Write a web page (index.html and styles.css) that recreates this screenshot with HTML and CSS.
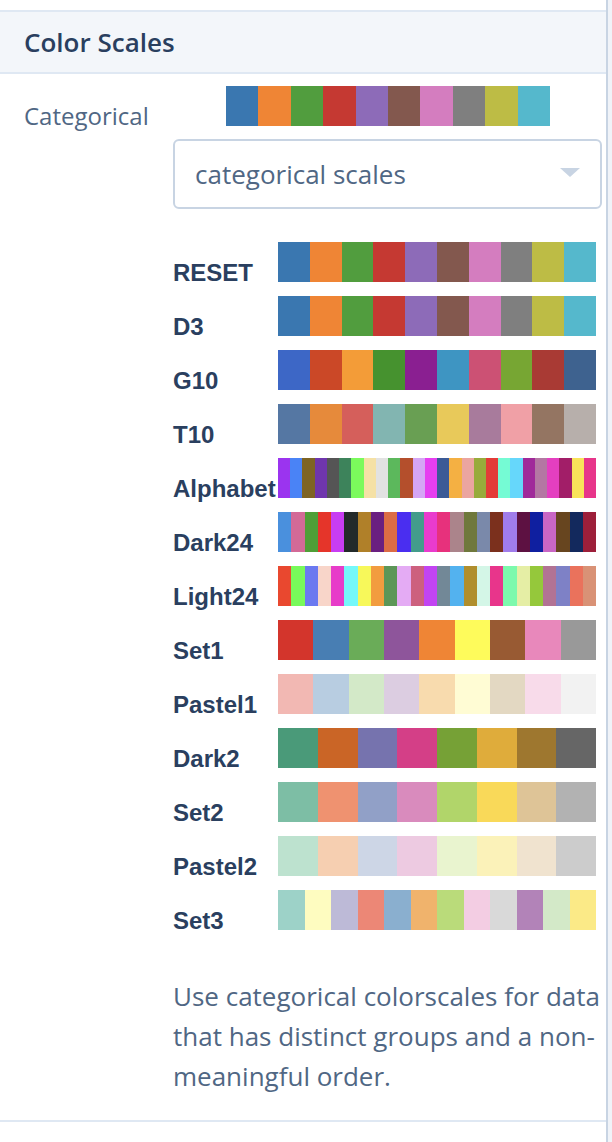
FILE: index.html
```html
<!DOCTYPE html>
<html lang="en">
<head>
<meta charset="utf-8">
<title>Color Scales</title>
<link rel="stylesheet" href="styles.css">
</head>
<body>
<div class="panel">
  <section class="fold">
    <header class="fold-header">Color Scales</header>
    <div class="fold-body">
      <div class="field">
        <div class="field-label">Categorical</div>
        <div class="swatch swatch-main">
          <span style="background:#3a77b0"></span><span style="background:#ef8535"></span><span style="background:#519d3e"></span><span style="background:#c53932"></span><span style="background:#8d6bb8"></span><span style="background:#83584e"></span><span style="background:#d47dbf"></span><span style="background:#7f7f7f"></span><span style="background:#bdbc45"></span><span style="background:#55b8cc"></span>
        </div>
      </div>

      <div class="dropdown">
        <span class="dropdown-value">categorical scales</span>
        <span class="caret"></span>
      </div>

      <div class="scales">
        <div class="scale"><div class="scale-name">RESET</div><div class="swatch">
          <span style="background:#3a77b0"></span><span style="background:#ef8535"></span><span style="background:#519d3e"></span><span style="background:#c53932"></span><span style="background:#8d6bb8"></span><span style="background:#83584e"></span><span style="background:#d47dbf"></span><span style="background:#7f7f7f"></span><span style="background:#bdbc45"></span><span style="background:#55b8cc"></span>
        </div></div>
        <div class="scale"><div class="scale-name">D3</div><div class="swatch">
          <span style="background:#3a77b0"></span><span style="background:#ef8535"></span><span style="background:#519d3e"></span><span style="background:#c53932"></span><span style="background:#8d6bb8"></span><span style="background:#83584e"></span><span style="background:#d47dbf"></span><span style="background:#7f7f7f"></span><span style="background:#bdbc45"></span><span style="background:#55b8cc"></span>
        </div></div>
        <div class="scale"><div class="scale-name">G10</div><div class="swatch">
          <span style="background:#3d67c6"></span><span style="background:#cb4827"></span><span style="background:#f39c38"></span><span style="background:#46922f"></span><span style="background:#8a1f91"></span><span style="background:#3e95c2"></span><span style="background:#cc5174"></span><span style="background:#77a633"></span><span style="background:#a93a34"></span><span style="background:#3e628f"></span>
        </div></div>
        <div class="scale"><div class="scale-name">T10</div><div class="swatch">
          <span style="background:#5577a3"></span><span style="background:#e68a3b"></span><span style="background:#d55f5b"></span><span style="background:#82b5b1"></span><span style="background:#699f53"></span><span style="background:#e8c95a"></span><span style="background:#a87b9c"></span><span style="background:#f0a0a6"></span><span style="background:#947562"></span><span style="background:#b7afab"></span>
        </div></div>
        <div class="scale"><div class="scale-name">Alphabet</div><div class="swatch">
          <span style="background:#9b34ef"></span><span style="background:#4a83f6"></span><span style="background:#7e6424"></span><span style="background:#6f36ad"></span><span style="background:#555555"></span><span style="background:#3d835b"></span><span style="background:#7bfa5c"></span><span style="background:#f5e1a6"></span><span style="background:#e2e2e2"></span><span style="background:#5cb85c"></span><span style="background:#b44f2c"></span><span style="background:#d5a5f5"></span><span style="background:#e63ef0"></span><span style="background:#3b5a96"></span><span style="background:#f4b043"></span><span style="background:#eba5a0"></span><span style="background:#98ab3b"></span><span style="background:#e33b38"></span><span style="background:#75fbd4"></span><span style="background:#66d7fb"></span><span style="background:#a0299a"></span><span style="background:#b477a3"></span><span style="background:#e43fc0"></span><span style="background:#a21e68"></span><span style="background:#f9e35a"></span><span style="background:#e7358a"></span>
        </div></div>
        <div class="scale"><div class="scale-name">Dark24</div><div class="swatch">
          <span style="background:#4a90dd"></span><span style="background:#d36a97"></span><span style="background:#4f9f37"></span><span style="background:#e5352a"></span><span style="background:#c83df3"></span><span style="background:#232a2a"></span><span style="background:#b08029"></span><span style="background:#6a1f80"></span><span style="background:#dc6c45"></span><span style="background:#4a2ef0"></span><span style="background:#439c8b"></span><span style="background:#e93bcd"></span><span style="background:#e7317c"></span><span style="background:#ab848b"></span><span style="background:#6f783c"></span><span style="background:#7a89aa"></span><span style="background:#7b301d"></span><span style="background:#a07ceb"></span><span style="background:#5d1142"></span><span style="background:#0f1fa0"></span><span style="background:#c966c4"></span><span style="background:#67451f"></span><span style="background:#13295d"></span><span style="background:#9d1f3a"></span>
        </div></div>
        <div class="scale"><div class="scale-name">Light24</div><div class="swatch">
          <span style="background:#e9482f"></span><span style="background:#78f95a"></span><span style="background:#6b79f0"></span><span style="background:#f8d5c9"></span><span style="background:#e73cc9"></span><span style="background:#75f8fa"></span><span style="background:#f7f85a"></span><span style="background:#f29c3f"></span><span style="background:#5c9657"></span><span style="background:#e4abf4"></span><span style="background:#cd607e"></span><span style="background:#c244f2"></span><span style="background:#728897"></span><span style="background:#53b2ef"></span><span style="background:#b08e2d"></span><span style="background:#d4f6e7"></span><span style="background:#e8358b"></span><span style="background:#7cf9ad"></span><span style="background:#e5eea5"></span><span style="background:#95c83b"></span><span style="background:#b27394"></span><span style="background:#7e81c6"></span><span style="background:#ea725c"></span><span style="background:#d99276"></span>
        </div></div>
        <div class="scale"><div class="scale-name">Set1</div><div class="swatch">
          <span style="background:#d3352c"></span><span style="background:#487eb3"></span><span style="background:#6aac58"></span><span style="background:#8e559b"></span><span style="background:#ef8535"></span><span style="background:#fefb5b"></span><span style="background:#985a33"></span><span style="background:#e888bb"></span><span style="background:#999999"></span>
        </div></div>
        <div class="scale"><div class="scale-name">Pastel1</div><div class="swatch">
          <span style="background:#f2b8b3"></span><span style="background:#b8cde1"></span><span style="background:#d3e9c8"></span><span style="background:#dccde1"></span><span style="background:#f8dbae"></span><span style="background:#fffcd4"></span><span style="background:#e3d8c2"></span><span style="background:#f8dbea"></span><span style="background:#f2f2f2"></span>
        </div></div>
        <div class="scale"><div class="scale-name">Dark2</div><div class="swatch">
          <span style="background:#4a9a79"></span><span style="background:#ca6526"></span><span style="background:#7673ae"></span><span style="background:#d43f87"></span><span style="background:#76a136"></span><span style="background:#dfac3b"></span><span style="background:#9e772f"></span><span style="background:#666666"></span>
        </div></div>
        <div class="scale"><div class="scale-name">Set2</div><div class="swatch">
          <span style="background:#7dbea5"></span><span style="background:#ef9270"></span><span style="background:#91a0c7"></span><span style="background:#d98bbd"></span><span style="background:#b1d56a"></span><span style="background:#f9d959"></span><span style="background:#dec497"></span><span style="background:#b2b2b2"></span>
        </div></div>
        <div class="scale"><div class="scale-name">Pastel2</div><div class="swatch">
          <span style="background:#bde2cf"></span><span style="background:#f6cfb1"></span><span style="background:#cdd6e6"></span><span style="background:#edcae1"></span><span style="background:#e9f4cf"></span><span style="background:#fbf2b9"></span><span style="background:#f0e3cf"></span><span style="background:#cccccc"></span>
        </div></div>
        <div class="scale"><div class="scale-name">Set3</div><div class="swatch">
          <span style="background:#9dd2c8"></span><span style="background:#fefcc0"></span><span style="background:#bdbad7"></span><span style="background:#ec8776"></span><span style="background:#8aafcf"></span><span style="background:#f0b36c"></span><span style="background:#badb7a"></span><span style="background:#f3cde3"></span><span style="background:#d9d9d9"></span><span style="background:#b283b8"></span><span style="background:#d3e9c8"></span><span style="background:#fbea87"></span>
        </div></div>
      </div>

      <p class="info">Use categorical colorscales for data that has distinct groups and a non-meaningful order.</p>
    </div>
  </section>
</div>
</body>
</html>
```
FILE: styles.css
```css
* {
  box-sizing: border-box;
}

html,
body {
  margin: 0;
  padding: 0;
}

body {
  background: #f0f3f8;
  font-family: "Open Sans", "Noto Sans", sans-serif;
  color: #506784;
}

.panel {
  width: 608px;
  min-height: 1142px;
  background: #ffffff;
  border-right: 2px solid #c8d4e3;
  padding-top: 10px;
}

.fold {
  border-top: 2px solid #dfe8f3;
  border-bottom: 2px solid #dfe8f3;
}

.fold-header {
  height: 62px;
  background: #f3f6fa;
  border-bottom: 2px solid #dfe8f3;
  padding-left: 24px;
  display: flex;
  align-items: center;
  font-size: 26px;
  font-weight: 600;
  color: #2a3f5f;
}

.fold-body {
  padding: 12px 0 24px 0;
}

.field {
  display: flex;
  align-items: flex-end;
  height: 40px;
}

.field-label {
  width: 226px;
  padding-left: 24px;
  font-size: 24px;
  line-height: 20px;
  color: #506784;
}

.swatch {
  display: flex;
  height: 40px;
  width: 318px;
}

.swatch span {
  flex: 1 1 0;
  height: 100%;
}

.swatch-main {
  width: 324px;
}

.dropdown {
  margin: 13px 0 0 173px;
  width: 429px;
  height: 70px;
  border: 2px solid #c8d4e3;
  border-radius: 6px;
  padding: 0 20px;
  display: flex;
  align-items: center;
  justify-content: space-between;
  font-size: 26px;
  color: #506784;
}

.caret {
  width: 0;
  height: 0;
  border-left: 10px solid transparent;
  border-right: 10px solid transparent;
  border-top: 9px solid #c8d4e3;
  margin-bottom: 3px;
}

.scales {
  margin: 33px 0 0 173px;
  display: flex;
  flex-direction: column;
  gap: 14px;
}

.scale {
  display: flex;
  align-items: flex-end;
  height: 40px;
}

.scale-name {
  width: 105px;
  font-family: "Liberation Sans", Arial, sans-serif;
  font-weight: 700;
  font-size: 24px;
  line-height: 18px;
  color: #2a3f5f;
  white-space: nowrap;
}

.info {
  margin: 46px 0 0 173px;
  width: 431px;
  font-size: 26px;
  line-height: 40px;
  color: #506784;
}
```
